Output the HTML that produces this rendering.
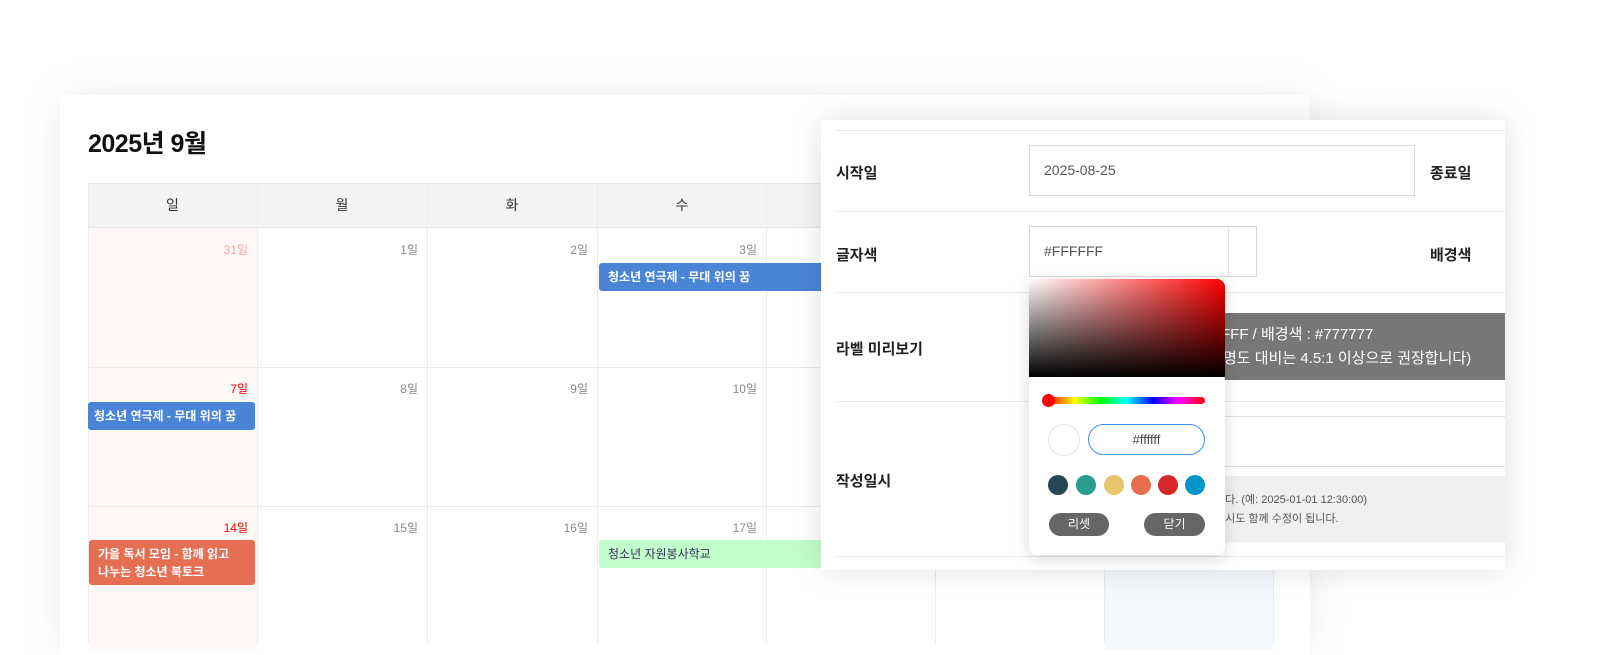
<!DOCTYPE html>
<html><head><meta charset="utf-8"><style>
*{box-sizing:border-box;margin:0;padding:0}
body{width:1600px;height:641px;overflow:hidden;background:#fff;font-family:"Liberation Sans","Noto Sans CJK KR",sans-serif;position:relative}
.abs{position:absolute}
.card{left:60px;top:95px;width:1250px;height:560px;background:#fff;box-shadow:0 0 40px rgba(0,0,0,0.08)}
h1{position:absolute;left:88px;top:124px;font-size:25px;font-weight:700;color:#111;letter-spacing:-0.5px}
.hdr{top:183px;height:45px;background:#f4f4f4;border-top:1px solid #e6e6e6;border-bottom:1px solid #e6e6e6;font-size:14px;color:#333;text-align:center;line-height:44px}
.cell{border-left:1px solid #ececec;border-bottom:1px solid #ececec}
.d{position:absolute;right:9px;top:12px;font-size:12px;color:#888}
.ev{position:absolute;height:28px;border-radius:3px;font-size:12px;font-weight:700;color:#fff;padding:0 9px;line-height:28px}
.panel{left:821px;top:120px;width:684px;height:450px;background:#fff;box-shadow:0 0 30px rgba(0,0,0,0.12)}
.ln{position:absolute;left:15px;right:0;height:1px;background:#e8e8e8}
.lb{position:absolute;left:15px;font-size:15px;font-weight:700;color:#222}
.inp{position:absolute;border:1px solid #d8d8d8;background:#fff;font-size:14px;color:#555;padding-left:14px}
.picker{left:1029px;top:279px;width:196px;height:276px;background:#fff;border-radius:8px;box-shadow:0 4px 16px rgba(0,0,0,0.15);overflow:hidden}
.sw{position:absolute;top:475px;width:20px;height:20px;border-radius:50%}
.btn{position:absolute;top:513px;height:23px;border-radius:12px;background:#666;color:#fff;font-size:12px;text-align:center;line-height:23px}
</style></head><body>
<div class="abs card"></div>
<h1>2025년 9월</h1>
<div class="abs hdr" style="left:88px;width:1186px"></div>
<div class="abs" style="left:88px;top:183px;width:1186px;font-size:14px;color:#333">
<span class="abs" style="left:0;width:169px;text-align:center;line-height:45px">일</span>
<span class="abs" style="left:169px;width:170px;text-align:center;line-height:45px">월</span>
<span class="abs" style="left:339px;width:170px;text-align:center;line-height:45px">화</span>
<span class="abs" style="left:509px;width:170px;text-align:center;line-height:45px">수</span>
</div>
<!-- vertical lines -->
<div class="abs" style="left:88px;top:183px;width:1px;height:460px;background:#ececec"></div>
<div class="abs" style="left:257px;top:183px;width:1px;height:460px;background:#ececec"></div>
<div class="abs" style="left:427px;top:183px;width:1px;height:460px;background:#ececec"></div>
<div class="abs" style="left:597px;top:183px;width:1px;height:460px;background:#ececec"></div>
<div class="abs" style="left:766px;top:183px;width:1px;height:460px;background:#ececec"></div>
<div class="abs" style="left:935px;top:183px;width:1px;height:460px;background:#ececec"></div>
<div class="abs" style="left:1104px;top:183px;width:1px;height:460px;background:#ececec"></div>
<div class="abs" style="left:1273px;top:183px;width:1px;height:460px;background:#ececec"></div>
<div class="abs" style="left:89px;top:229px;width:168px;height:420px;background:#fff8f6"></div>
<div class="abs" style="left:1105px;top:229px;width:168px;height:420px;background:#f5f9fd"></div>
<div class="abs" style="left:88px;top:367px;width:1186px;height:1px;background:#ececec"></div>
<div class="abs" style="left:88px;top:506px;width:1186px;height:1px;background:#ececec"></div>
<!-- dates -->
<div class="abs" style="left:88px;top:229px;width:169px;height:130px"><span class="d" style="color:#f5a5a5">31일</span></div>
<div class="abs" style="left:257px;top:229px;width:170px;height:130px"><span class="d">1일</span></div>
<div class="abs" style="left:427px;top:229px;width:170px;height:130px"><span class="d">2일</span></div>
<div class="abs" style="left:597px;top:229px;width:169px;height:130px"><span class="d">3일</span></div>
<div class="abs" style="left:88px;top:368px;width:169px;height:130px"><span class="d" style="color:#e00">7일</span></div>
<div class="abs" style="left:257px;top:368px;width:170px;height:130px"><span class="d">8일</span></div>
<div class="abs" style="left:427px;top:368px;width:170px;height:130px"><span class="d">9일</span></div>
<div class="abs" style="left:597px;top:368px;width:169px;height:130px"><span class="d">10일</span></div>
<div class="abs" style="left:88px;top:507px;width:169px;height:130px"><span class="d" style="color:#e00">14일</span></div>
<div class="abs" style="left:257px;top:507px;width:170px;height:130px"><span class="d">15일</span></div>
<div class="abs" style="left:427px;top:507px;width:170px;height:130px"><span class="d">16일</span></div>
<div class="abs" style="left:597px;top:507px;width:169px;height:130px"><span class="d">17일</span></div>
<div class="ev" style="left:599px;top:263px;width:240px;background:#4a84d6">청소년 연극제 - 무대 위의 꿈</div>
<div class="ev" style="left:88px;top:402px;width:167px;background:#4a84d6;padding-left:6px">청소년 연극제 - 무대 위의 꿈</div>
<div class="ev" style="left:89px;top:540px;width:166px;height:45px;background:#e56f52;line-height:18px;padding-top:5px">가을 독서 모임 - 함께 읽고<br>나누는 청소년 북토크</div>
<div class="ev" style="left:599px;top:540px;width:240px;background:#c4fdcc;color:#335;font-weight:400">청소년 자원봉사학교</div>
<!-- panel -->
<div class="abs panel"></div>
<div class="abs" style="left:821px;top:120px;width:684px;height:450px">
<div class="ln" style="top:10px"></div>
<div class="ln" style="top:91px"></div>
<div class="ln" style="top:172px"></div>
<div class="ln" style="top:281px"></div>
<div class="ln" style="top:436px"></div>
<div class="lb" style="top:42px">시작일</div>
<div class="lb" style="top:124px">글자색</div>
<div class="lb" style="top:218px">라벨 미리보기</div>
<div class="lb" style="top:350px">작성일시</div>
<div class="lb" style="left:609px;top:42px">종료일</div>
<div class="lb" style="left:609px;top:124px">배경색</div>
<div class="inp" style="left:208px;top:25px;width:386px;height:51px;line-height:49px">2025-08-25</div>
<div class="inp" style="left:208px;top:106px;width:228px;height:51px;line-height:49px">#FFFFFF<span class="abs" style="left:198px;top:0;width:1px;height:49px;background:#e0e0e0"></span></div>
<div class="abs" style="left:380px;top:193px;width:304px;height:67px;background:#777;color:#fff;font-size:15px;line-height:24px;padding:10px 0 0 24px;white-space:nowrap;overflow:hidden"><div style="margin-left:-4px">FFF / 배경색 : #777777</div><div style="margin-left:-20px">의 명도 대비는 4.5:1 이상으로 권장합니다)</div></div>
<div class="abs" style="left:380px;top:296px;width:304px;height:1px;background:#ddd"></div>
<div class="abs" style="left:380px;top:346px;width:304px;height:1px;background:#ddd"></div>
<div class="abs" style="left:380px;top:356px;width:304px;height:66px;background:#f0f0f2;font-size:11px;color:#555;line-height:19px;padding:15px 0 0 0;white-space:nowrap;overflow:hidden"><div style="margin-left:14px">니다. (예: 2025-01-01 12:30:00)</div><div style="margin-left:14px">일시도 함께 수정이 됩니다.</div></div>
</div>
<!-- picker -->
<div class="abs picker">
<div style="position:absolute;left:0;top:0;width:196px;height:98px;background:linear-gradient(to top,#000,rgba(0,0,0,0)),linear-gradient(to right,#fff,#f00)"></div>
</div>
<div class="abs" style="left:1048px;top:397px;width:157px;height:7px;border-radius:4px;background:linear-gradient(to right,#f00,#ff0,#0f0,#0ff,#00f,#f0f,#f00)"></div>
<div class="abs" style="left:1042px;top:394px;width:13px;height:13px;border-radius:50%;background:#f00"></div>
<div class="abs" style="left:1048px;top:424px;width:32px;height:32px;border-radius:50%;border:1px solid #e4e4e4;background:#fff"></div>
<div class="abs" style="left:1088px;top:424px;width:117px;height:31px;border-radius:16px;border:1px solid #3b8ef0;font-size:13px;color:#444;text-align:center;line-height:29px">#ffffff</div>
<div class="sw" style="left:1048px;background:#264653"></div>
<div class="sw" style="left:1076px;background:#2a9d8f"></div>
<div class="sw" style="left:1104px;background:#e9c46a"></div>
<div class="sw" style="left:1131px;background:#e76f51"></div>
<div class="sw" style="left:1158px;background:#d62828"></div>
<div class="sw" style="left:1185px;background:#0096c7"></div>
<div class="btn" style="left:1049px;width:60px">리셋</div>
<div class="btn" style="left:1144px;width:61px">닫기</div>
</body></html>
